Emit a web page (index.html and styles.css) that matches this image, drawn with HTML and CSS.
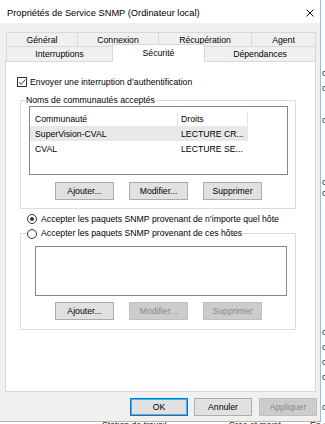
FILE: index.html
```html
<!DOCTYPE html>
<html lang="fr">
<head>
<meta charset="utf-8">
<title>Propriétés de Service SNMP</title>
<link rel="stylesheet" href="styles.css">
</head>
<body>
<div class="desktop">
  <div class="bg-right">
    <span class="frag f1">c</span>
    <span class="frag f2">c</span>
    <span class="frag f3">c</span>
    <span class="frag f4">c</span>
    <span class="frag f5">c</span>
    <span class="frag f6">c</span>
    <span class="frag f7">c</span>
    <span class="frag f8">c</span>
    <span class="frag f9">c</span>
    <span class="frag f10">c</span>
  </div>
  <div class="bg-bottom">
    <span class="svc-icon"></span>
    <span class="svc-name">Station de travail</span>
    <span class="svc-desc">Crée et maint...</span>
    <span class="svc-state">En cours</span>
  </div>

  <div class="window">
    <div class="titlebar">
      <span class="title">Propriétés de Service SNMP (Ordinateur local)</span>
      <svg class="close" viewBox="0 0 8 8" width="8" height="8"><path d="M0.5 0.5 L7.5 7.5 M7.5 0.5 L0.5 7.5" stroke="#000" stroke-width="0.9" fill="none"/></svg>
    </div>

    <div class="tabs">
      <div class="tabrow back">
        <div class="tab t-gen">Général</div>
        <div class="tab t-con">Connexion</div>
        <div class="tab t-rec">Récupération</div>
        <div class="tab t-age">Agent</div>
      </div>
      <div class="tabrow front">
        <div class="tab t-int">Interruptions</div>
        <div class="tab sel t-sec">Sécurité</div>
        <div class="tab t-dep">Dépendances</div>
      </div>
    </div>

    <div class="panel">
      <div class="check-row">
        <span class="checkbox"><svg viewBox="0 0 10 10" width="10" height="10"><path d="M2 5.2 L4.2 7.4 L8.3 2.6" stroke="#222" stroke-width="0.9" fill="none"/></svg></span>
        <span>Envoyer une interruption d’authentification</span>
      </div>

      <div class="group g1">
        <div class="group-label">Noms de communautés acceptés</div>
        <div class="listview">
          <div class="lv-head">
            <div class="col c1">Communauté</div>
            <div class="col c2">Droits</div>
          </div>
          <div class="lv-row hl">
            <div class="col c1">SuperVision-CVAL</div>
            <div class="col c2">LECTURE CR...</div>
          </div>
          <div class="lv-row">
            <div class="col c1">CVAL</div>
            <div class="col c2">LECTURE SE...</div>
          </div>
        </div>
        <div class="btn-row">
          <div class="btn">Ajouter...</div>
          <div class="btn">Modifier...</div>
          <div class="btn">Supprimer</div>
        </div>
      </div>

      <div class="radio-row r1">
        <span class="radio on"></span>
        <span>Accepter les paquets SNMP provenant de n’importe quel hôte</span>
      </div>

      <div class="group g2">
        <div class="group-label radio-label">
          <span class="radio"></span>
          <span>Accepter les paquets SNMP provenant de ces hôtes</span>
        </div>
        <div class="listbox"></div>
        <div class="btn-row b2">
          <div class="btn">Ajouter...</div>
          <div class="btn disabled">Modifier...</div>
          <div class="btn disabled">Supprimer</div>
        </div>
      </div>
    </div>

    <div class="footer">
      <div class="btn default">OK</div>
      <div class="btn">Annuler</div>
      <div class="btn disabled">Appliquer</div>
    </div>
  </div>
</div>
</body>
</html>
```

FILE: styles.css
```css
* { box-sizing: border-box; }
html, body { margin: 0; padding: 0; }
body {
  font-family: "Liberation Sans", Arial, sans-serif;
  font-size: 8.7px;
  color: #000;
  background: #fff;
}

/* desktop behind the dialog */
.desktop {
  position: relative;
  width: 325px;
  height: 424px;
  overflow: hidden;
  display: grid;
  grid-template-columns: 320px 5px;
  grid-template-rows: 420px 4px;
  background: #fff;
}
.bg-right {
  grid-column: 2;
  grid-row: 1;
  display: flex;
  flex-direction: column;
  padding-left: 2px;
  color: #222;
  line-height: 10px;
}
.frag { display: block; }
.f1 { margin-top: 68px; }
.f2 { margin-top: 5px; }
.f3 { margin-top: 22px; }
.f4 { margin-top: 52px; }
.f5 { margin-top: 1px; }
.f6 { margin-top: 129px; }
.f7, .f8, .f9 { margin-top: 5px; }
.f10 { margin-top: 20px; }
.bg-bottom {
  grid-column: 1 / span 2;
  grid-row: 2;
  display: flex;
  align-items: flex-start;
  line-height: 10px;
  white-space: nowrap;
  color: #222;
}
.svc-icon {
  width: 9px; height: 9px;
  margin: 1px 0 0 98px;
  background: #8a8fa0;
}
.svc-name { margin-left: 4px; }
.svc-desc { margin-left: 62px; }
.svc-state { margin-left: 22px; }

/* dialog window */
.window {
  position: absolute;
  left: 0;
  top: 0;
  width: 321px;
  height: 422px;
  background: #f0f0f0;
  border-right: 1px solid #8fc1ea;
  border-bottom: 1px solid #8fc1ea;
  display: flex;
  flex-direction: column;
}
.titlebar {
  height: 23px;
  flex: none;
  background: #fff;
  display: flex;
  align-items: center;
  padding: 2px 0 0 7px;
  font-size: 9.3px;
}
.title { flex: 1; }
.close { margin: 0 6px 0 0; }

/* tabs */
.tabs { padding: 9px 0 0 6px; }
.tabrow { display: flex; }
.back { height: 14px; }
.front { height: 15px; align-items: flex-end; }
.tab {
  height: 100%;
  margin-left: -1px;
  border: 1px solid #d9d9d9;
  border-bottom: none;
  background: #f0f0f0;
  display: flex;
  align-items: center;
  justify-content: center;
  white-space: nowrap;
}
.tab:first-child { margin-left: 0; }
.t-gen { width: 72px; }
.t-con { width: 82px; }
.t-rec { width: 94px; }
.t-age { width: 65px; }
.t-int { width: 107px; }
.t-sec { width: 93px; }
.t-dep { width: 112px; }
.tab.sel {
  height: 18px;
  margin-bottom: -1px;
  padding-bottom: 2px;
  background: #fff;
  position: relative;
  z-index: 1;
}

/* page */
.panel {
  width: 311px;
  height: 331px;
  margin-left: 5px;
  flex: none;
  background: #fff;
  border: 1px solid #d9d9d9;
  padding: 15px 0 0 14px;
}
.check-row {
  height: 10px;
  margin-left: -3px;
  display: flex;
  align-items: center;
  gap: 3px;
  white-space: nowrap;
}
.checkbox {
  width: 10px; height: 10px;
  border: 1px solid #333;
  background: #fff;
  display: flex;
}
.checkbox svg { margin: -1px; }

.group {
  width: 276px;
  border: 1px solid #dcdcdc;
}
.g1 { height: 109px; margin-top: 13px; }
.g2 { height: 97px; margin-top: 9px; }
.group-label {
  width: fit-content;
  line-height: 11px;
  height: 11px;
  margin: -6px 0 0 4px;
  padding: 0 1px;
  background: #fff;
  white-space: nowrap;
}
.radio-label {
  display: flex;
  align-items: center;
  gap: 4px;
  margin-left: 6px;
  padding: 0 2px 0 0;
}

.listview {
  width: 259px;
  height: 69px;
  margin-left: 8px;
  border: 1px solid #828790;
  background: #fff;
}
.lv-head, .lv-row { display: flex; white-space: nowrap; }
.lv-head { height: 19px; align-items: center; padding-top: 4px; }
.lv-row { height: 15px; align-items: center; }
.lv-row.hl { background: #e8e8e8; width: 218px; }
.col { padding-left: 5px; overflow: hidden; }
.c1 { width: 148px; }
.c2 { width: 70px; padding-left: 3px; }
.lv-head .c1 { border-right: 1px solid #e5e5e5; height: 100%; display: flex; align-items: center; }
.lv-head .c2 { border-right: 1px solid #e5e5e5; height: 100%; display: flex; align-items: center; padding-left: 3px; }

.btn-row {
  display: flex;
  gap: 15px;
  margin: 7px 0 0 34px;
}
.b2 { margin-top: 6px; }
.btn {
  width: 59px;
  height: 18px;
  background: #e1e1e1;
  border: 1px solid #adadad;
  display: flex;
  align-items: center;
  justify-content: center;
  white-space: nowrap;
}
.btn.disabled {
  background: #cccccc;
  border-color: #bfbfbf;
  color: #8a8a8a;
}
.btn.default {
  border-color: #0078d7;
  box-shadow: inset 0 0 0 1px #5ea6e4;
}

.radio-row {
  height: 11px;
  display: flex;
  align-items: center;
  gap: 4px;
  margin: 4px 0 0 7px;
  white-space: nowrap;
}
.radio {
  width: 10px; height: 10px;
  border: 1px solid #333;
  border-radius: 50%;
  background: #fff;
  flex: none;
  display: flex;
  align-items: center;
  justify-content: center;
}
.radio.on::after {
  content: "";
  width: 4px; height: 4px;
  border-radius: 50%;
  background: #333;
}

.listbox {
  width: 252px;
  height: 50px;
  margin: 7px 0 0 14px;
  border: 1px solid #828790;
  background: #fff;
}

.footer {
  display: flex;
  gap: 6px;
  padding: 6px 0 0 130px;
}
.footer .btn { width: 58px; }
.footer .btn:nth-child(3) { margin-left: 1px; }
```
